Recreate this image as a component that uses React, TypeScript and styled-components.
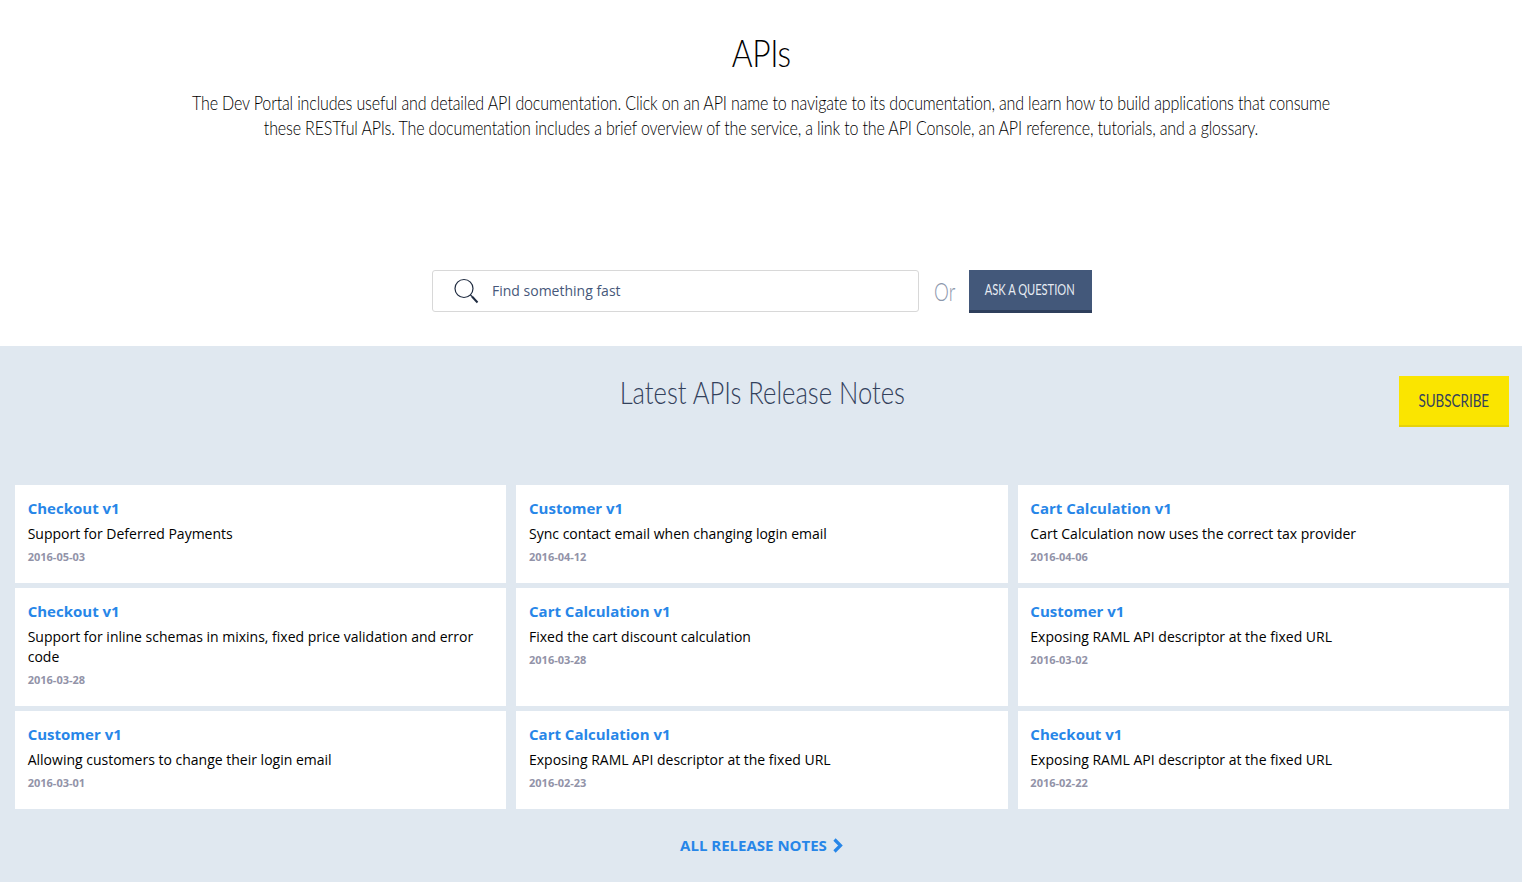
import React from "react";
import styled, { createGlobalStyle } from "styled-components";

const Global = createGlobalStyle`
  html, body { margin: 0; padding: 0; background: #fff; }
  body { font-family: "Open Sans", "Liberation Sans", sans-serif; height: 882px; overflow: hidden; }
`;

const thin = `"Lato", "Open Sans", sans-serif`;

const Top = styled.section`
  height: 346px;
  box-sizing: border-box;
  padding-top: 31px;
  display: flex;
  flex-direction: column;
  align-items: center;
`;

const Title = styled.h1`
  margin: 0;
  font-family: ${thin};
  font-weight: 300;
  font-size: 37px;
  line-height: 44px;
  color: #000;
  letter-spacing: -0.5px;
  transform: scaleX(0.86);
`;

const Intro = styled.p`
  margin: 15px 0 0;
  width: 1500px;
  flex: none;
  font-family: ${thin};
  font-weight: 300;
  font-size: 20px;
  line-height: 25px;
  text-align: center;
  color: #000;
  letter-spacing: -0.2px;
  transform: scaleX(0.802);
  white-space: pre-line;
`;

const SearchRow = styled.div`
  margin: 130px 0 0 1px;
  display: flex;
  align-items: flex-start;
`;

const SearchBox = styled.div`
  width: 487px;
  height: 42px;
  box-sizing: border-box;
  background: #fff;
  border: 1px solid #d8d8d8;
  border-radius: 3px;
  padding-left: 20px;
  display: flex;
  align-items: center;
  gap: 13.5px;
  font-size: 14px;
  color: #46587a;
`;

const SearchLabel = styled.span`
  position: relative;
  top: -1px;
`;

const Or = styled.span`
  width: 50px;
  padding-left: 15px;
  box-sizing: border-box;
  font-family: ${thin};
  font-weight: 300;
  font-size: 25px;
  line-height: 42px;
  color: #8d98ad;
`;

const OrText = styled.span`
  display: inline-block;
  transform: scaleX(0.75);
  transform-origin: left center;
`;

const AskButton = styled.button`
  width: 123px;
  height: 43px;
  padding: 0 0 3px;
  box-sizing: border-box;
  border: 0;
  border-bottom: 3px solid #2f3f5c;
  background: #43587a;
  color: #e6ebf2;
  font-family: ${thin};
  font-size: 15px;
  font-weight: 400;
  white-space: nowrap;
`;

const Squeezed = styled.span<{ $scale: number }>`
  display: inline-block;
  transform: scaleX(${(p) => p.$scale});
`;

const Notes = styled.section`
  height: 536px;
  box-sizing: border-box;
  background: #e0e8f0;
  padding: 0 13px 0 15px;
  position: relative;
`;

const NotesHead = styled.h2`
  margin: 0;
  padding-top: 26px;
  height: 139px;
  box-sizing: border-box;
  text-align: center;
  font-family: ${thin};
  font-weight: 300;
  font-size: 32px;
  line-height: 40px;
  color: #33415c;
`;

const Subscribe = styled.button`
  position: absolute;
  top: 30px;
  right: 13px;
  width: 110px;
  height: 51px;
  box-sizing: border-box;
  border: 0;
  border-bottom: 2px solid #e6d20a;
  background: #fae500;
  color: #33415c;
  font-family: ${thin};
  font-size: 17px;
  padding: 0;
`;

const Grid = styled.div`
  display: grid;
  grid-template-columns: repeat(3, 1fr);
  column-gap: 10px;
  row-gap: 5px;
  grid-template-rows: 98px 118px 98px;
`;

const Card = styled.article`
  background: #fff;
  padding: 13px 13px 0 12.7px;
`;

const CardTitle = styled.a`
  display: block;
  font-size: 15px;
  font-weight: 700;
  line-height: 20px;
  color: #2786e8;
`;

const CardText = styled.div`
  margin-top: 6px;
  font-size: 14px;
  line-height: 20px;
  color: #000;
`;

const CardDate = styled.div`
  margin-top: 5px;
  font-size: 11px;
  font-weight: 700;
  line-height: 15px;
  color: #9293a8;
`;

const AllLink = styled.a`
  margin-top: 26px;
  display: flex;
  justify-content: center;
  align-items: center;
  gap: 5px;
  font-size: 15px;
  font-weight: 700;
  line-height: 20px;
  color: #2786e8;
`;

const cards = [
  ["Checkout v1", "Support for Deferred Payments", "2016-05-03"],
  ["Customer v1", "Sync contact email when changing login email", "2016-04-12"],
  ["Cart Calculation v1", "Cart Calculation now uses the correct tax provider", "2016-04-06"],
  ["Checkout v1", "Support for inline schemas in mixins, fixed price validation and error code", "2016-03-28"],
  ["Cart Calculation v1", "Fixed the cart discount calculation", "2016-03-28"],
  ["Customer v1", "Exposing RAML API descriptor at the fixed URL", "2016-03-02"],
  ["Customer v1", "Allowing customers to change their login email", "2016-03-01"],
  ["Cart Calculation v1", "Exposing RAML API descriptor at the fixed URL", "2016-02-23"],
  ["Checkout v1", "Exposing RAML API descriptor at the fixed URL", "2016-02-22"],
];

export default function App() {
  return (
    <>
      <Global />
      <Top>
        <Title>APIs</Title>
        <Intro>
          {"The Dev Portal includes useful and detailed API documentation. Click on an API name to navigate to its documentation, and learn how to build applications that consume\nthese RESTful APIs. The documentation includes a brief overview of the service, a link to the API Console, an API reference, tutorials, and a glossary."}
        </Intro>
        <SearchRow>
          <SearchBox>
            <svg width="26" height="26" viewBox="0 0 26 26" fill="none" stroke="#1f2b40">
              <circle cx="11" cy="10.5" r="9" strokeWidth="1.2" />
              <path d="M17.5 17l1.5 1.5" strokeWidth="1.2" />
              <path d="M19 18.5l5.5 6" strokeWidth="2" />
            </svg>
            <SearchLabel>Find something fast</SearchLabel>
          </SearchBox>
          <Or><OrText>Or</OrText></Or>
          <AskButton><Squeezed $scale={0.74}>ASK A QUESTION</Squeezed></AskButton>
        </SearchRow>
      </Top>
      <Notes>
        <NotesHead><Squeezed $scale={0.8}>Latest APIs Release Notes</Squeezed></NotesHead>
        <Subscribe><Squeezed $scale={0.79}>SUBSCRIBE</Squeezed></Subscribe>
        <Grid>
          {cards.map(([title, text, date], i) => (
            <Card key={i}>
              <CardTitle>{title}</CardTitle>
              <CardText>{text}</CardText>
              <CardDate>{date}</CardDate>
            </Card>
          ))}
        </Grid>
        <AllLink>
          ALL RELEASE NOTES
          <svg width="12" height="15" viewBox="0 0 12 15" fill="none" stroke="#2786e8" strokeWidth="3.2">
            <path d="M2.5 1.5l6 6-6 6" />
          </svg>
        </AllLink>
      </Notes>
    </>
  );
}
